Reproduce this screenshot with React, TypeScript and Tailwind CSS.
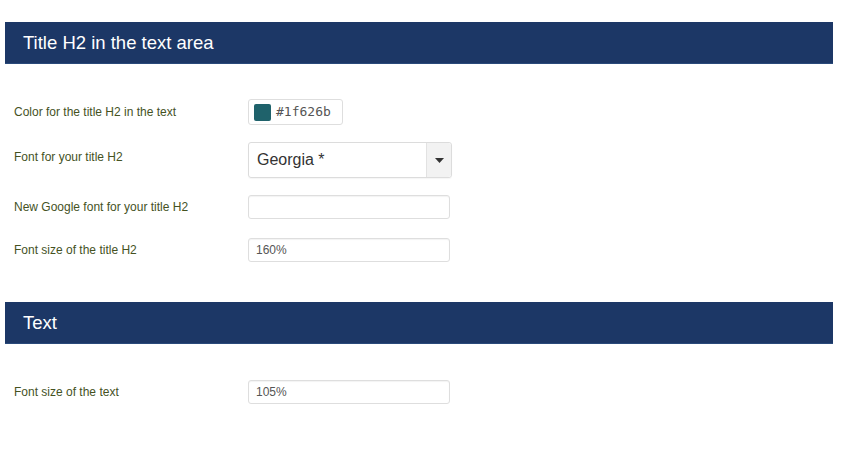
import React from "react";

const font = { fontFamily: '"Liberation Sans", Arial, Helvetica, sans-serif' };

function Header({ title }: { title: string }) {
  return (
    <div className="mx-[5px] w-[828px] h-[42px] bg-[#1c3766] flex items-center pl-[18px] pt-[2px] border-b border-[#2a4a7a]">
      <span className="text-white text-[18.5px] leading-none">{title}</span>
    </div>
  );
}

function Label({ children }: { children: React.ReactNode }) {
  return <div className="w-[234px] text-[12px] text-[#45521f]">{children}</div>;
}

function TextInput({ value }: { value?: string }) {
  return (
    <div className="w-[202px] h-[24px] border border-[#dedede] rounded-[3px] bg-white flex items-center pl-[7px] shadow-[inset_0_1px_1px_rgba(0,0,0,0.05)]">
      <span className="text-[12px] text-[#555]">{value ?? ""}</span>
    </div>
  );
}

export default function App() {
  return (
    <div className="w-[850px] h-[462px] bg-white pt-[22px]" style={font}>
      <Header title="Title H2 in the text area" />
      <div className="pl-[14px] flex flex-col">
        <div className="flex items-center mt-[35px] h-[26px]">
          <Label>Color for the title H2 in the text</Label>
          <div className="w-[95px] h-[26px] border border-[#dedede] rounded-[3px] flex items-center pl-[5px] gap-[5px]">
            <div className="w-[17px] h-[17px] rounded-[2px] bg-[#1f626b]" />
            <span className="text-[13px] text-[#555]" style={{ fontFamily: '"DejaVu Sans Mono", "Liberation Mono", monospace' }}>#1f626b</span>
          </div>
        </div>
        <div className="flex items-start mt-[17px] h-[36px]">
          <div className="pt-[6px]"><Label>Font for your title H2</Label></div>
          <div className="w-[204px] h-[36px] border border-[#dcdcdc] rounded-[3px] flex shadow-[0_1px_1px_rgba(0,0,0,0.04)]">
            <div className="flex-1 flex items-center pl-[8px] text-[16px] text-[#333]">Georgia *</div>
            <div className="w-[25px] bg-[#f2f2f2] border-l border-[#e2e2e2] flex items-center justify-center rounded-r-[3px]">
              <svg width="9" height="5" viewBox="0 0 9 5"><path d="M0 0h9L4.5 5z" fill="#333" /></svg>
            </div>
          </div>
        </div>
        <div className="flex items-center mt-[17px] h-[24px]">
          <Label>New Google font for your title H2</Label>
          <TextInput />
        </div>
        <div className="flex items-center mt-[19px] h-[24px]">
          <Label>Font size of the title H2</Label>
          <TextInput value="160%" />
        </div>
      </div>
      <div className="mt-[40px]">
        <Header title="Text" />
      </div>
      <div className="pl-[14px] flex flex-col">
        <div className="flex items-center mt-[36px] h-[24px]">
          <Label>Font size of the text</Label>
          <TextInput value="105%" />
        </div>
      </div>
    </div>
  );
}
